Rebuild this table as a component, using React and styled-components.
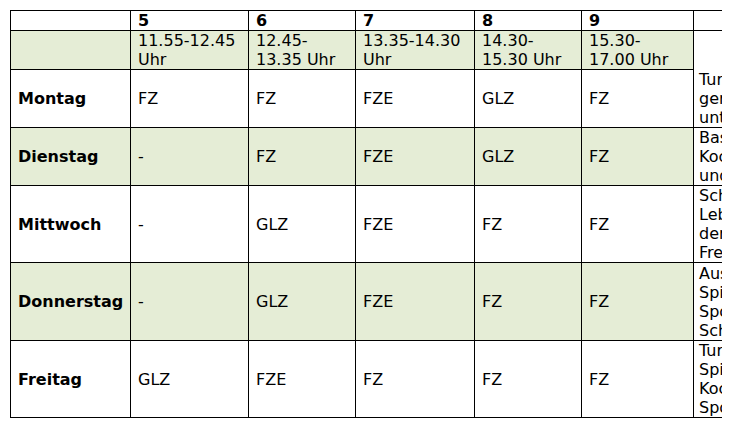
import React from "react";
import styled, { createGlobalStyle } from "styled-components";

const GlobalStyle = createGlobalStyle`
  body {
    margin: 0;
    background: #fff;
    font-family: "DejaVu Sans", Verdana, sans-serif;
    color: #000;
  }
`;

const Page = styled.div`
  padding: 10px 0 0 10px;
`;

const Scroller = styled.div`
  width: 712px;
  overflow: hidden;
`;

const Plan = styled.table`
  table-layout: fixed;
  width: 843px;
  border-collapse: collapse;
  font-size: 16px;
  line-height: 19px;
  text-align: left;
`;

const Row = styled.tr`
  background: ${p => (p.$green ? "#e5edd6" : "#fff")};
`;

const Cell = styled.td`
  border: 1px solid #000;
  padding: 0 8px 0 7px;
  height: ${p => p.$h || "auto"};
  vertical-align: ${p => p.$align || "middle"};
  font-weight: ${p => (p.$bold ? 700 : 400)};
  overflow: hidden;
`;

const SideCell = styled(Cell)`
  background: #fff;
  padding-left: 5px;
  white-space: nowrap;
`;

const widths = [120, 118, 107, 119, 107, 112, 160];
const slots = ["5", "6", "7", "8", "9"];
const times = [
  "11.55-12.45 Uhr",
  "12.45-13.35 Uhr",
  "13.35-14.30 Uhr",
  "14.30-15.30 Uhr",
  "15.30-17.00 Uhr",
];

const days = [
  { name: "Montag", cells: ["FZ", "FZ", "FZE", "GLZ", "FZ"], side: ["Turnen", "gemeinsam", "unterwegs"], h: "57px" },
  { name: "Dienstag", cells: ["-", "FZ", "FZE", "GLZ", "FZ"], side: ["Basteln", "Kochen", "und Backen"], h: "57px", green: true },
  { name: "Mittwoch", cells: ["-", "GLZ", "FZE", "FZ", "FZ"], side: ["Schach", "Lebensraum", "der", "Freunde"], h: "76px" },
  { name: "Donnerstag", cells: ["-", "GLZ", "FZE", "FZ", "FZ"], side: ["Ausflüge", "Spiele", "Sport", "Schach"], h: "77px", green: true },
  { name: "Freitag", cells: ["GLZ", "FZE", "FZ", "FZ", "FZ"], side: ["Turnen", "Spiele", "Kochen", "Sport"], h: "76px" },
];

const Lines = ({ lines }) =>
  lines.map((l, i) => (
    <React.Fragment key={i}>
      {i > 0 && <br />}
      {l}
    </React.Fragment>
  ));

export default function App() {
  return (
    <Page>
      <GlobalStyle />
      <Scroller>
        <Plan>
          <colgroup>
            {widths.map((w, i) => (
              <col key={i} style={{ width: w }} />
            ))}
          </colgroup>
          <tbody>
            <Row>
              <Cell $h="19px" />
              {slots.map(s => (
                <Cell key={s} $bold $h="19px">
                  {s}
                </Cell>
              ))}
              <Cell $h="19px" />
            </Row>
            <Row $green>
              <Cell $h="38px" />
              {times.map(t => (
                <Cell key={t} $align="top">
                  {t}
                </Cell>
              ))}
              <SideCell rowSpan={2} $align="bottom">
                <Lines lines={days[0].side} />
              </SideCell>
            </Row>
            {days.map((d, i) => (
              <Row key={d.name} $green={d.green}>
                <Cell $bold $h={d.h}>
                  {d.name}
                </Cell>
                {d.cells.map((c, j) => (
                  <Cell key={j}>{c}</Cell>
                ))}
                {i > 0 && (
                  <SideCell>
                    <Lines lines={d.side} />
                  </SideCell>
                )}
              </Row>
            ))}
          </tbody>
        </Plan>
      </Scroller>
    </Page>
  );
}
